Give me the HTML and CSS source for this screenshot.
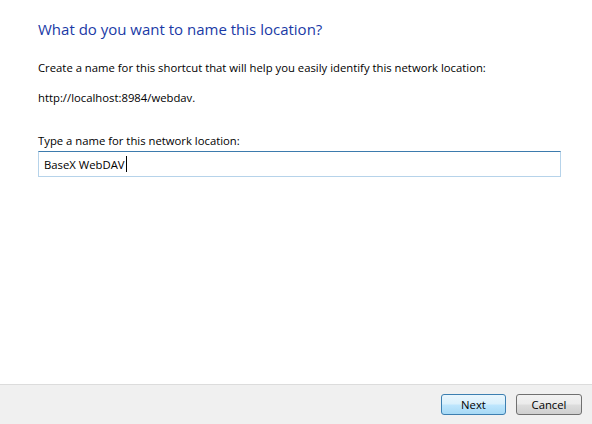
FILE: index.html
```html
<!DOCTYPE html>
<html lang="en">
<head>
  <meta charset="UTF-8">
  <title>Add Network Location</title>
  <link rel="stylesheet" href="styles.css">
</head>
<body>
  <div class="wizard">
    <div class="content">
      <h1 class="title">What do you want to name this location?</h1>
      <p class="text">Create a name for this shortcut that will help you easily identify this network location:</p>
      <p class="text url">http://localhost:8984/webdav.</p>

      <label class="label" for="loc-name">Type a name for this network location:</label>
      <div class="field">
        <span class="value">BaseX WebDAV</span><span class="caret"></span>
      </div>
    </div>

    <div class="footer">
      <button class="btn default">Next</button>
      <button class="btn">Cancel</button>
    </div>
  </div>
</body>
</html>
```
FILE: styles.css
```css
html, body {
  margin: 0;
  height: 100%;
}
body {
  font-family: "Open Sans", "Noto Sans", sans-serif;
  font-size: 11.3px;
  color: #000;
  background: #fff;
}
.wizard {
  display: flex;
  flex-direction: column;
  height: 424px;
}
.content {
  flex: 1;
  padding: 18px 31px 0 38px;
}
.title {
  margin: 0;
  font-size: 15px;
  font-weight: normal;
  color: #1a3aa6;
  line-height: 22px;
}
.text {
  margin: 0;
  line-height: 16px;
}
.title + .text {
  margin-top: 20px;
}
.url {
  margin-top: 14px;
}
.label {
  display: block;
  margin-top: 27px;
  line-height: 16px;
}
.field {
  margin-top: 2px;
  height: 24px;
  border: 1px solid #b6d3ea;
  border-top-color: #3d7bad;
  display: flex;
  align-items: center;
  padding-left: 5px;
}
.caret {
  display: inline-block;
  width: 1px;
  height: 16px;
  background: #000;
  margin-left: 1px;
}
.footer {
  box-sizing: border-box;
  height: 40px;
  border-top: 1px solid #dcdcdc;
  background: #f0f0f0;
  display: flex;
  justify-content: flex-end;
  align-items: flex-start;
  gap: 10px;
  padding: 9px 10px 0 0;
}
.btn {
  width: 66px;
  height: 21px;
  font-family: inherit;
  font-size: 11.3px;
  border: 1px solid #707070;
  border-radius: 3px;
  background: linear-gradient(#f2f2f2 0%, #ebebeb 48%, #dddddd 52%, #cfcfcf 100%);
  padding: 0;
  color: #000;
}
.btn.default {
  width: 65px;
  border-color: #3c7fb1;
  background: linear-gradient(#eaf6fd 0%, #d9f0fc 48%, #bee6fd 52%, #a7d9f5 100%);
}
```
